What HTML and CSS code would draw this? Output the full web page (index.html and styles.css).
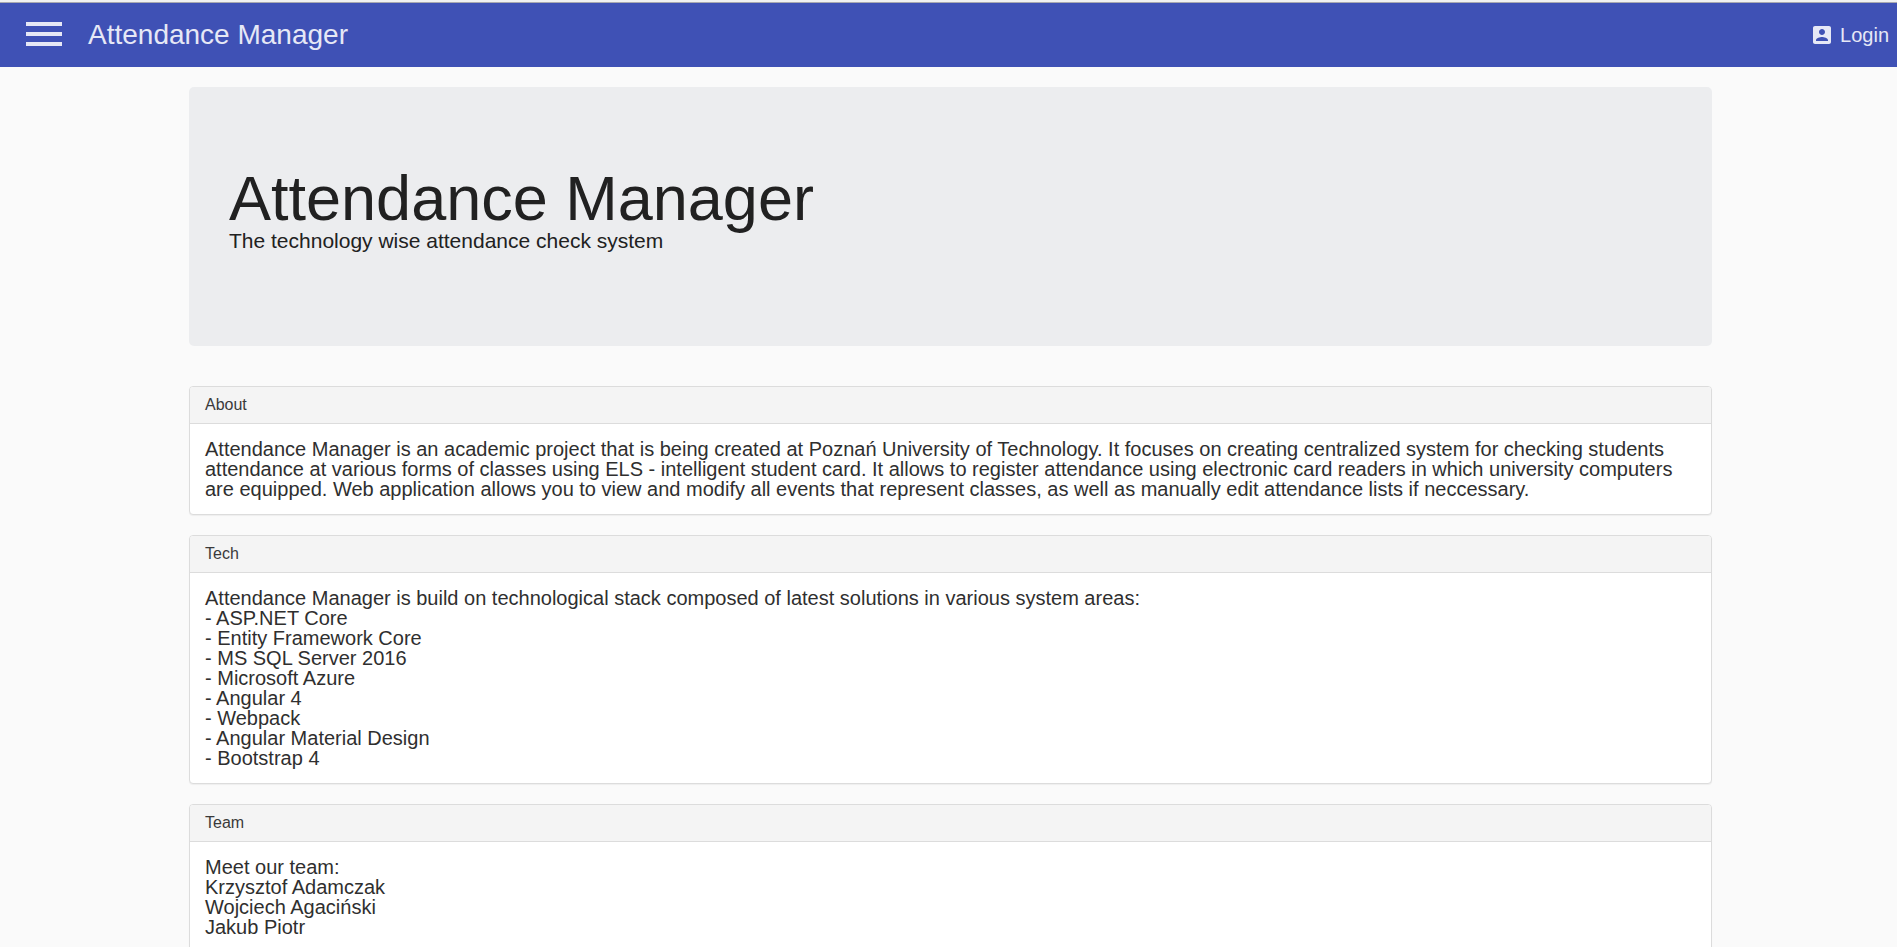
FILE: index.html
```html
<!DOCTYPE html>
<html lang="en">
<head>
<meta charset="utf-8">
<title>Attendance Manager</title>
<meta name="viewport" content="width=device-width, initial-scale=1">
<link rel="stylesheet" href="styles.css">
</head>
<body>
<header class="toolbar">
  <button class="menu-button" type="button" aria-label="Menu">
    <svg class="menu-icon" viewBox="0 0 36 24" aria-hidden="true"><path d="M0 0h36v4H0zM0 10h36v4H0zM0 20h36v4H0z"/></svg>
  </button>
  <span class="brand">Attendance Manager</span>
  <a class="login" href="#">
    <svg class="login-icon" viewBox="0 0 24 24" aria-hidden="true"><path d="M3 5v14c0 1.1.89 2 2 2h14c1.1 0 2-.9 2-2V5c0-1.1-.9-2-2-2H5c-1.11 0-2 .9-2 2zm12 4c0 1.66-1.34 3-3 3s-3-1.34-3-3 1.34-3 3-3 3 1.34 3 3zm-9 8c0-2 4-3.100 6-3.100s6 1.100 6 3.100v1H6v-1z"/></svg>
    <span>Login</span>
  </a>
</header>
<main class="content">
  <section class="hero">
    <h1 class="hero-title">Attendance Manager</h1>
    <p class="hero-text">The technology wise attendance check system</p>
  </section>
  <section class="card">
    <h2 class="card-header">About</h2>
    <p class="card-body">Attendance Manager is an academic project that is being created at Poznań University of Technology. It focuses on creating centralized system for checking students attendance at various forms of classes using ELS - intelligent student card. It allows to register attendance using electronic card readers in which university computers are equipped. Web application allows you to view and modify all events that represent classes, as well as manually edit attendance lists if neccessary.</p>
  </section>
  <section class="card">
    <h2 class="card-header">Tech</h2>
    <p class="card-body">Attendance Manager is build on technological stack composed of latest solutions in various system areas:<br>
    - ASP.NET Core<br>
    - Entity Framework Core<br>
    - MS SQL Server 2016<br>
    - Microsoft Azure<br>
    - Angular 4<br>
    - Webpack<br>
    - Angular Material Design<br>
    - Bootstrap 4</p>
  </section>
  <section class="card">
    <h2 class="card-header">Team</h2>
    <p class="card-body">Meet our team:<br>
    Krzysztof Adamczak<br>
    Wojciech Agaciński<br>
    Jakub Piotr</p>
  </section>
</main>
</body>
</html>
```
FILE: styles.css
```css
* {
  box-sizing: border-box;
}

html {
  overflow: hidden;
}

body {
  margin: 0;
  background: #fafafa;
  color: #2f2f2f;
  font-family: "Liberation Sans", Arial, sans-serif;
  font-size: 20px;
  line-height: 20px;
}

.toolbar {
  display: flex;
  align-items: center;
  height: 67px;
  padding: 0 8px 0 26px;
  border-top: 2px solid #f1f1f1;
  background: #3f51b5;
  box-shadow: inset 0 1px 0 #a9a9b0;
  color: #e6e8f6;
}

.menu-button {
  display: flex;
  margin: 0 26px 0 0;
  padding: 0 0 1px;
  border: 0;
  background: none;
  color: inherit;
  cursor: pointer;
}

.menu-icon {
  width: 36px;
  height: 24px;
  fill: currentColor;
}

.brand {
  font-size: 28px;
  line-height: 33px;
}

.login {
  display: flex;
  align-items: center;
  gap: 6px;
  margin-left: auto;
  padding-top: 1px;
  color: inherit;
  text-decoration: none;
}

.login-icon {
  width: 24px;
  height: 24px;
  fill: currentColor;
}

.content {
  padding: 20px 185px 20px 189px;
}

.hero {
  margin-bottom: 40px;
  padding: 80px 40px 95px;
  border-radius: 5px;
  background: #ecedef;
  color: #212121;
}

.hero-title {
  margin: 0;
  font-size: 63px;
  font-weight: 400;
  line-height: 63px;
}

.hero-text {
  margin: 0;
  font-size: 21px;
  line-height: 21px;
}

.card {
  margin-bottom: 20px;
  border: 1px solid #dcdcdc;
  border-radius: 4px;
  background: #ffffff;
  box-shadow: 0 1px 1px rgba(0, 0, 0, 0.05);
}

.card-header {
  margin: 0;
  padding: 10px 15px;
  border-bottom: 1px solid #dcdcdc;
  border-radius: 3px 3px 0 0;
  background: #f4f4f4;
  color: #3a3a3a;
  font-size: 16px;
  font-weight: 400;
  line-height: 16px;
}

.card-body {
  margin: 0;
  padding: 15px;
}
```
